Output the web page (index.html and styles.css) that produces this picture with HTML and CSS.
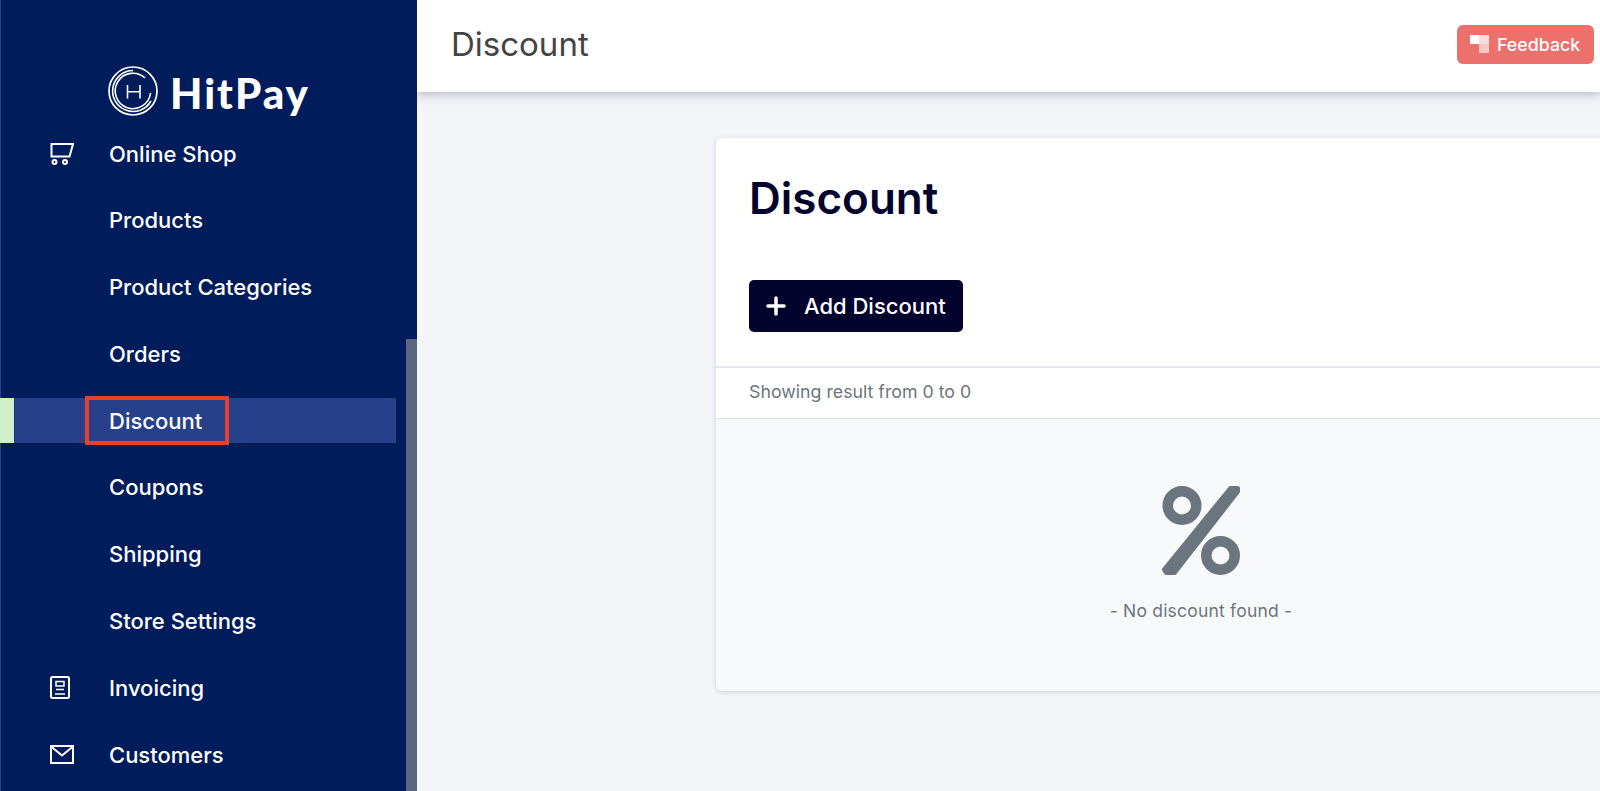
FILE: index.html
```html
<!DOCTYPE html>
<html lang="en">
<head>
  <meta charset="UTF-8">
  <title>Discount - HitPay</title>
  <link rel="stylesheet" href="styles.css">
</head>
<body>

<aside class="sidebar">
  <div class="logo">
    <svg class="logo-mark" viewBox="0 0 50 50" fill="none" stroke="#fff">
      <circle cx="25" cy="25" r="24" stroke-width="1.700"/>
      <path d="M37 12A17.700 17.700 0 1 0 42.500 27" stroke-width="1.600"/>
      <path d="M25 4.500A20.500 20.500 0 1 0 43 35" stroke-width="1.600"/>
      <path d="M19.500 19v13.500M32 19v13.500M19.500 25.700h12.500" stroke-width="1.600"/>
    </svg>
    <span class="logo-text">HitPay</span>
  </div>

  <nav class="nav">
    <a class="nav-item">
      <span class="nav-icon">
        <svg width="24" height="23" viewBox="0 0 24 23" fill="none" stroke="#fff" stroke-width="2">
          <path d="M23 2H1.500v12.500H19.500L23 2z"/>
          <circle cx="4.500" cy="20" r="2"/>
          <circle cx="15" cy="20" r="2"/>
        </svg>
      </span>
      <span class="nav-label">Online Shop</span>
    </a>
    <a class="nav-item"><span class="nav-icon"></span><span class="nav-label">Products</span></a>
    <a class="nav-item"><span class="nav-icon"></span><span class="nav-label">Product Categories</span></a>
    <a class="nav-item"><span class="nav-icon"></span><span class="nav-label">Orders</span></a>
    <a class="nav-item active"><span class="nav-icon"></span><span class="nav-label">Discount</span></a>
    <a class="nav-item"><span class="nav-icon"></span><span class="nav-label">Coupons</span></a>
    <a class="nav-item"><span class="nav-icon"></span><span class="nav-label">Shipping</span></a>
    <a class="nav-item"><span class="nav-icon"></span><span class="nav-label">Store Settings</span></a>
    <a class="nav-item">
      <span class="nav-icon">
        <svg width="20" height="23" viewBox="0 0 20 23" fill="none" stroke="#fff" stroke-width="2">
          <rect x="1" y="1" width="18" height="21" rx="1.500"/>
          <rect x="6" y="5.500" width="8" height="4.500" stroke-width="1.500"/>
          <path d="M6 13.500h8M5 18h10" stroke-width="1.500"/>
        </svg>
      </span>
      <span class="nav-label">Invoicing</span>
    </a>
    <a class="nav-item">
      <span class="nav-icon">
        <svg width="24" height="19" viewBox="0 0 24 19" fill="none" stroke="#fff" stroke-width="2">
          <rect x="1" y="1" width="22" height="17"/>
          <path d="M1 1.500l11 9 11-9"/>
        </svg>
      </span>
      <span class="nav-label">Customers</span>
    </a>
  </nav>

  <div class="scroll-thumb"></div>
</aside>

<main class="main">
  <header class="topbar">
    <h1 class="topbar-title">Discount</h1>
    <button class="feedback-btn">
      <svg width="19" height="18" viewBox="0 0 19 18">
        <rect x="0" y="0" width="9" height="9" fill="#fff"/>
        <rect x="9" y="0" width="10" height="9" fill="#fbdedc"/>
        <rect x="9" y="9" width="10" height="9" fill="#f9c9c6"/>
      </svg>
      Feedback
    </button>
  </header>

  <section class="card">
    <div class="card-head">
      <h2 class="card-title">Discount</h2>
      <button class="add-btn">
        <svg width="20" height="20" viewBox="0 0 20 20" stroke="#fff" stroke-width="3.500" stroke-linecap="round">
          <path d="M10 2v16M2 10h16"/>
        </svg>
        Add Discount
      </button>
    </div>
    <div class="result-row">Showing result from 0 to 0</div>
    <div class="empty">
      <svg class="empty-icon" width="78" height="89" viewBox="0 0 78 89" fill="none" stroke="#6c757d">
        <circle cx="20" cy="19.500" r="14.250" stroke-width="10.500"/>
        <circle cx="58.500" cy="69.500" r="14.250" stroke-width="10.500"/>
        <path d="M68.500 2.500H75.500V5.500L12.500 86.500H4.500L2.500 83.500z" fill="#6c757d" stroke-width="5" stroke-linejoin="round"/>
      </svg>
      <p class="empty-text">- No discount found -</p>
    </div>
  </section>
</main>

</body>
</html>
```

FILE: styles.css
```css
html, body {
  height: 100%;
}

body {
  margin: 0;
  height: 791px;
  overflow: hidden;
  display: flex;
  font-family: "Inter", "Liberation Sans", sans-serif;
  background-color: #f3f5f9;
}

.sidebar {
  position: relative;
  flex: 0 0 417px;
  height: 791px;
  overflow: hidden;
  background-color: #001c5b;
  box-shadow: inset 1px 0 0 #2f4277;
}

.logo {
  display: flex;
  align-items: center;
  gap: 12px;
  height: 50px;
  padding: 66px 0 0 108px;
}

.logo-mark {
  width: 50px;
  height: 50px;
}

.logo-text {
  padding-top: 4px;
  font-family: "Lato", "Inter", sans-serif;
  font-size: 42px;
  font-weight: 900;
  letter-spacing: 2px;
  color: #fff;
}

.nav {
  display: flex;
  flex-direction: column;
  gap: 21.8px;
  margin-top: 15px;
  margin-right: 21px;
}

.nav-item {
  display: flex;
  align-items: center;
  height: 45px;
  color: #fff;
  font-size: 22px;
  font-weight: 450;
}

.nav-icon {
  flex: 0 0 59px;
  padding-left: 50px;
  display: flex;
}

.nav-label {
  position: relative;
}

.nav-item.active {
  box-sizing: border-box;
  border-left: 14px solid #d0f0cc;
  background-color: #27408b;
  box-shadow: inset 1px 0 0 #1a2f9a;
}

.nav-item.active .nav-icon {
  flex-basis: 45px;
}

/* red marker around the current page */
.nav-item.active .nav-label::after {
  content: '';
  position: absolute;
  top: -12px;
  left: -24px;
  right: -27px;
  bottom: -11px;
  border: 4px solid #e8402a;
}

.scroll-thumb {
  position: absolute;
  top: 339px;
  right: 0;
  bottom: 0;
  width: 11px;
  background-color: #5d6480;
}

.main {
  flex: 1;
  min-width: 0;
  overflow: hidden;
}

.topbar {
  display: flex;
  align-items: center;
  justify-content: space-between;
  height: 92px;
  padding: 0 6px 4px 34px;
  box-sizing: border-box;
  background-color: #fff;
  box-shadow: 0 2px 10px rgba(60, 60, 80, 0.35);
}

.topbar-title {
  margin: 0;
  font-size: 33px;
  font-weight: 400;
  color: #444;
}

.feedback-btn {
  display: flex;
  align-items: center;
  gap: 8px;
  height: 39px;
  width: 137px;
  padding: 0 0 0 13px;
  border: 0;
  border-radius: 6px;
  background-color: #ec706b;
  color: #fff;
  font-family: inherit;
  font-size: 17.800px;
  font-weight: 500;
}

.card {
  margin: 46px -86px 0 299px;
  border-radius: 6px;
  overflow: hidden;
  background-color: #fff;
  box-shadow: 0 1px 5px rgba(60, 60, 80, 0.2);
}

.card-head {
  padding: 28px 33px 34px;
  border-bottom: 2px solid #e6e8ee;
}

.card-title {
  margin: 0 0 50px;
  font-size: 44px;
  line-height: 64px;
  font-weight: 600;
  color: #03032e;
}

.add-btn {
  display: flex;
  align-items: center;
  gap: 18px;
  height: 52px;
  width: 214px;
  padding: 0 0 0 17px;
  border: 0;
  border-radius: 5px;
  background-color: #03032e;
  color: #fff;
  font-family: inherit;
  font-size: 22px;
  font-weight: 450;
}

.result-row {
  height: 51px;
  padding: 0 0 3px 33px;
  box-sizing: border-box;
  display: flex;
  align-items: center;
  font-size: 17.750px;
  color: #6c757d;
  border-bottom: 1px solid #e2e5eb;
}

.empty {
  display: flex;
  flex-direction: column;
  align-items: center;
  height: 272px;
  padding-top: 67px;
  box-sizing: border-box;
  background-color: #f8f9fb;
}

.empty-icon {
  display: block;
}

.empty-text {
  margin: 25px 0 0;
  font-size: 17.500px;
  line-height: 22px;
  letter-spacing: 0.2px;
  color: #6c757d;
}
```
